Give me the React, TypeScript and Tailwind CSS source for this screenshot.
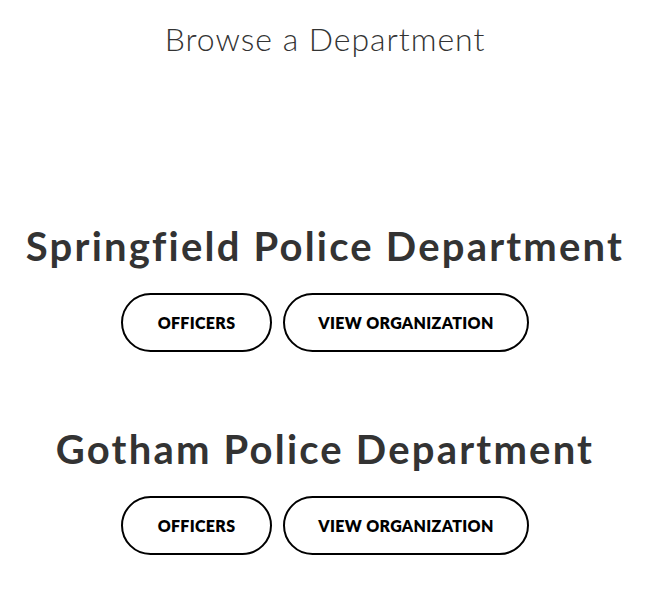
const departments = ["Springfield Police Department", "Gotham Police Department"]

function DeptButton({ label, width }: { label: string; width: string }) {
  return (
    <a
      href="#"
      className={`${width} h-[59px] flex items-center justify-center rounded-full border-2 border-black text-[16px] font-extrabold text-black uppercase tracking-[0.02em]`}
    >
      {label}
    </a>
  )
}

export default function App() {
  return (
    <div className="w-[650px] bg-white text-[#333] font-['Lato','Open_Sans',sans-serif]">
      <h1 className="pt-[19px] h-[60px] text-center text-[32px] leading-[40px] font-light tracking-[0.03em]">
        Browse a Department
      </h1>

      <div className="pt-[162px] flex flex-col gap-[73px]">
        {departments.map((name) => (
          <div key={name} className="flex flex-col items-center">
            <h2 className="text-[40px] leading-[48px] font-bold text-center tracking-[0.055em]">{name}</h2>
            <div className="mt-[23px] flex gap-[11px]">
              <DeptButton label="Officers" width="w-[151px]" />
              <DeptButton label="View Organization" width="w-[246px]" />
            </div>
          </div>
        ))}
      </div>
    </div>
  )
}
